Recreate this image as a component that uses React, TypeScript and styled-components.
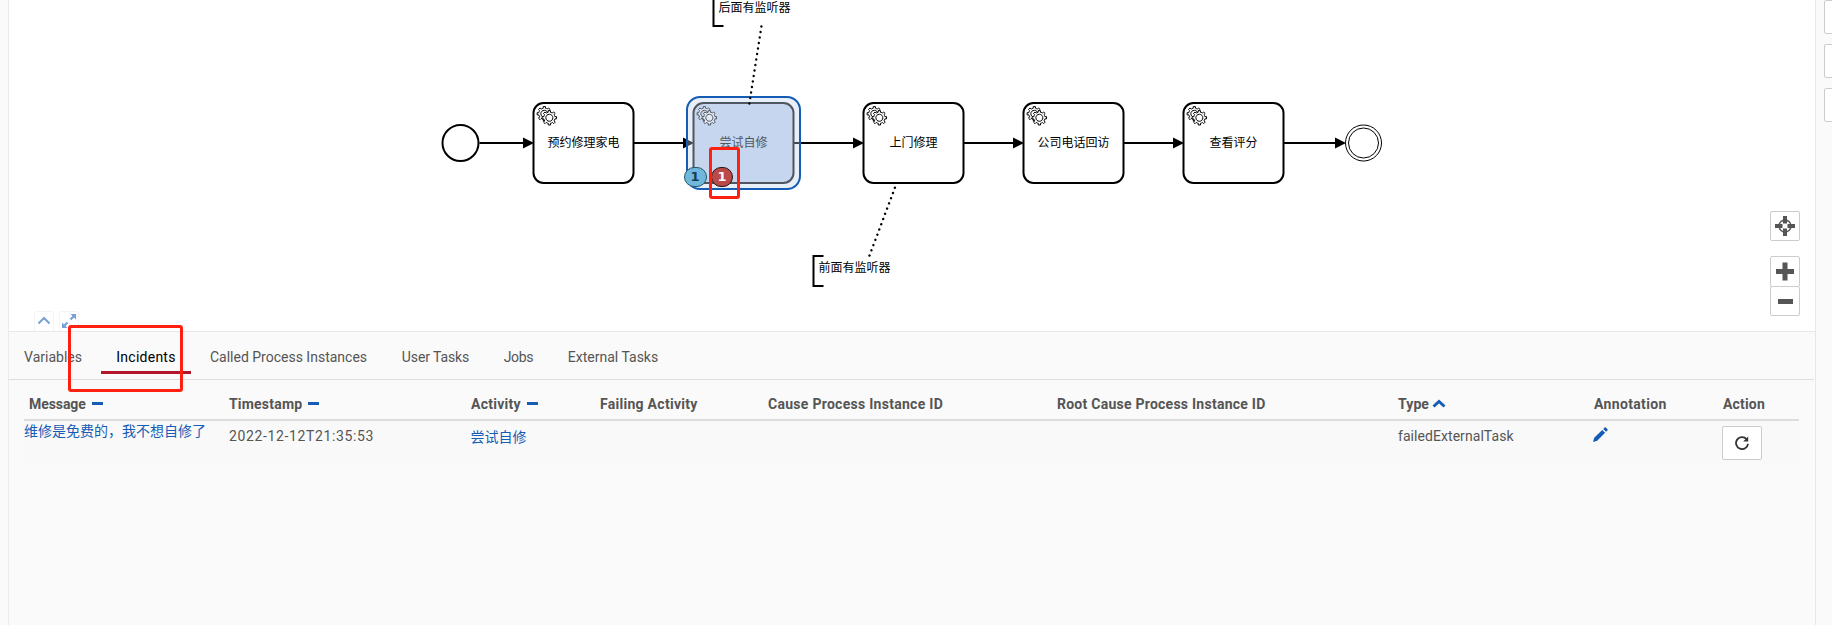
import React from 'react';
import styled, { createGlobalStyle } from 'styled-components';

const Global = createGlobalStyle`
  *, *::before, *::after { box-sizing: border-box; }
  body { margin: 0; overflow: hidden; background: #fafafa; color: #555; font: 14px/20px Roboto, "Noto Sans CJK SC", sans-serif; }
  button { margin: 0; padding: 0; font: inherit; }
`;

const Page = styled.div`
  display: grid;
  grid-template-columns: 8px 1808px 16px;
  width: 1832px;
  height: 625px;
  overflow: hidden;
`;
const Main = styled.main`
  grid-column: 2;
  display: flex;
  flex-direction: column;
  border-left: 1px solid #eaeaea;
  border-right: 1px solid #e8e8e8;
`;
const Canvas = styled.section`
  position: relative;
  height: 332px;
  flex: none;
  background: #fff;
  border-bottom: 1px solid #e8e8e8;
`;
const Diagram = styled.svg`
  display: block;
  font-family: "Noto Sans CJK SC", sans-serif;
  font-size: 12px;
`;
const Badge = styled.span<{ $tone: 'run' | 'incident'; $x: number }>`
  position: absolute;
  left: ${(p) => p.$x}px;
  top: 167px;
  width: ${(p) => (p.$tone === 'run' ? 23 : 22)}px;
  height: 20px;
  border: 1px solid ${(p) => (p.$tone === 'run' ? '#27566b' : '#2a1414')};
  border-radius: 10px;
  background: ${(p) => (p.$tone === 'run' ? '#70b8db' : '#b94a48')};
  color: ${(p) => (p.$tone === 'run' ? '#143f50' : '#fff')};
  font: 700 13px/18px "DejaVu Sans", sans-serif;
  text-align: center;
`;
const Marker = styled.div<{ $x: number; $y: number; $w: number; $h: number }>`
  position: absolute;
  z-index: 2;
  left: ${(p) => p.$x}px;
  top: ${(p) => p.$y}px;
  width: ${(p) => p.$w}px;
  height: ${(p) => p.$h}px;
  border: 3px solid #ff2012;
  border-radius: 3px;
`;
const Controls = styled.div`
  position: absolute;
  right: 15px;
  top: 211px;
  display: flex;
  flex-direction: column;
  gap: 15px;
`;
const ControlGroup = styled.div`
  display: flex;
  flex-direction: column;
`;
const Control = styled.button<{ $joined?: boolean }>`
  display: grid;
  place-items: center;
  width: 30px;
  height: ${(p) => (p.$joined ? 31 : 30)}px;
  border: 1px solid #ccc;
  border-radius: 2px;
  background: #fff;
  & + & { margin-top: -1px; }
`;
const Handles = styled.div`
  position: absolute;
  left: 25px;
  bottom: 0;
  display: flex;
  gap: 5px;
`;
const Handle = styled.span`
  display: grid;
  justify-content: center;
  padding-top: 2px;
  width: 20px;
  height: 20px;
  border: 1px solid #f4f4f4;
  border-bottom: 0;
  border-radius: 3px 3px 0 0;
`;
const Tabs = styled.nav`
  display: flex;
  height: 48px;
  flex: none;
  padding-left: 15px;
  margin-right: 1px;
  border-bottom: 1px solid #ddd;
`;
const Tab = styled.a<{ $w: number; $s?: number; $gap?: number; $active?: boolean }>`
  width: ${(p) => p.$w}px;
  height: 42px;
  padding-top: 15px;
  margin-right: ${(p) => p.$gap ?? 2}px;
  text-align: center;
  white-space: nowrap;
  letter-spacing: ${(p) => p.$s ?? 0}px;
  color: ${(p) => (p.$active ? '#000' : '#555')};
  border-bottom: ${(p) => (p.$active ? '3px solid #b5152b' : '0')};
`;
const Table = styled.div`
  margin: 10px 16px 0 15px;
`;
const Row = styled.div<{ $head?: boolean }>`
  display: grid;
  grid-template-columns: 200px 242px 129px 168px 289px 341px 196px 129px 1fr;
  height: ${(p) => (p.$head ? 31 : 44)}px;
  font-weight: ${(p) => (p.$head ? 700 : 400)};
  border-bottom: ${(p) => (p.$head ? '2px solid #ddd' : '0')};
  background: ${(p) => (p.$head ? 'transparent' : '#f9f9f9')};
`;
const Cell = styled.div<{ $s?: number; $pad?: number; $top?: number }>`
  display: flex;
  align-items: flex-start;
  padding-left: ${(p) => p.$pad ?? 5}px;
  padding-top: ${(p) => p.$top ?? 4}px;
  letter-spacing: ${(p) => p.$s ?? 0}px;
  white-space: nowrap;
`;
const Link = styled.a`
  color: #155cb5;
  font-family: "Noto Sans CJK SC", sans-serif;
  line-height: 18px;
`;
const Dash = styled.i`
  width: 11px;
  height: 3px;
  margin: 8px 0 0 6px;
  background: #155cb5;
`;
const SortUp = styled.svg`
  margin: 5px 0 0 3px;
`;
const Retry = styled.button`
  display: grid;
  place-items: center;
  width: 40px;
  height: 34px;
  border: 1px solid #ccc;
  border-radius: 2px;
  background: #fff;
`;
const Side = styled.aside`
  display: flex;
  flex-direction: column;
  gap: 10px;
  padding-left: 8px;
`;
const SideButton = styled.span`
  width: 34px;
  height: 34px;
  flex: none;
  border: 1px solid #ccc;
  border-radius: 2px;
  background: #fff;
`;

const GEAR =
  'v -1.71335 c 0.352326,-0.0705 0.703932,-0.17838 1.047628,-0.32133 0.344416,-0.14465 0.665822,-0.32133 0.966377,-0.52145 l 1.19431,1.18005 1.567487,-1.57688 -1.195028,-1.18014 c 0.403376,-0.61394 0.683079,-1.29908 0.825447,-2.01824 l 1.622133,-0.01 v -2.2196 l -1.636514,0.01 c -0.07333,-0.35153 -0.178319,-0.70024 -0.323564,-1.04372 -0.145244,-0.34406 -0.321407,-0.6644 -0.522735,-0.96217 l 1.131035,-1.13631 -1.583305,-1.56293 -1.129598,1.13589 c -0.614052,-0.40108 -1.302883,-0.68093 -2.022633,-0.82247 l 0.0093,-1.61852 h -2.241173 l 0.0042,1.63124 c -0.353763,0.0736 -0.705369,0.17977 -1.049785,0.32371 -0.344415,0.14437 -0.665102,0.32092 -0.9635006,0.52006 l -1.1698628,-1.15823 -1.5667691,1.5792 1.1684265,1.15669 c -0.4026573,0.61283 -0.68308,1.29797 -0.8247287,2.01713 l -1.6588041,0.003 v 2.22174 l 1.6724648,-0.006 c 0.073327,0.35077 0.1797598,0.70243 0.3242851,1.04472 0.1452428,0.34448 0.3214064,0.6644 0.5227339,0.96066 l -1.1993431,1.19723 1.5840256,1.56011 1.1964668,-1.19348 c 0.6140517,0.40346 1.3028827,0.68232 2.0233517,0.82331 l 7.19e-4,1.69892 h 2.226848 z m 0.221462,-3.9957 c -1.788948,0.7502 -3.8576,-0.0928 -4.6097055,-1.87438 -0.7521065,-1.78321 0.090598,-3.84627 1.8802645,-4.59604 1.78823,-0.74936 3.856881,0.0929 4.608987,1.87437 0.752106,1.78165 -0.0906,3.84612 -1.879546,4.59605 z';

const tasks = [
  { x: 533.5, label: '预约修理家电' },
  { x: 693.5, label: '尝试自修', selected: true },
  { x: 863.5, label: '上门修理' },
  { x: 1023.5, label: '公司电话回访' },
  { x: 1183.5, label: '查看评分' },
];
const flows = [
  [479.5, 533.5],
  [633.5, 693.5],
  [793.5, 863.5],
  [963.5, 1023.5],
  [1123.5, 1183.5],
  [1283.5, 1345.5],
];

function TaskNode({ x, label, selected }: { x: number; label: string; selected?: boolean }) {
  const ink = selected ? '#50565f' : '#000';
  const fill = selected ? '#c5d6ee' : '#fff';
  const gear = selected ? '#e3ebf6' : '#fff';
  return (
    <g>
      {selected && (
        <rect x={x - 6.5} y={97} width={113} height={92} rx={13} fill="#bdd1eb" fillOpacity={0.35} stroke="#155cb5" strokeWidth={2} />
      )}
      <rect x={x} y={103} width={100} height={80} rx={10} fill={fill} stroke={ink} strokeWidth={2} />
      <path d={`M ${x + 12},121 ${GEAR}`} fill={gear} stroke={ink} />
      <circle cx={x + 16.2} cy={118} r={5.4} fill={gear} />
      <path d={`M ${x + 17},125 ${GEAR}`} fill={gear} stroke={ink} />
      <text x={x + 50} y={147} textAnchor="middle" fill={ink}>{label}</text>
    </g>
  );
}

function ProcessDiagram() {
  return (
    <Diagram width="1806" height="331" viewBox="9 0 1806 331">
      {flows.map(([a, b]) => (
        <g key={a}>
          <path d={`M${a} 143H${b - 5}`} stroke="#000" strokeWidth={2} />
          <path d={`M${b - 10.5} 137.5L${b + 0.5} 143L${b - 10.5} 148.5Z`} />
        </g>
      ))}
      <circle cx={460.5} cy={143} r={18} fill="#fff" stroke="#000" strokeWidth={2} />
      <circle cx={1363.5} cy={143} r={18} fill="#fff" stroke="#000" />
      <circle cx={1363.5} cy={143} r={15} fill="#fff" stroke="#000" />
      {tasks.map((t) => <TaskNode key={t.x} {...t} />)}
      <g fill="none" stroke="#000" strokeWidth={2}>
        <path d="M723.5 -4H713.5V26H723.5" />
        <path d="M823.5 256H813.5V286H823.5" />
        <g strokeLinecap="round" strokeWidth={2.4} strokeDasharray="0.1 5.47">
          <path d="M761.4 26.4L749.3 104" />
          <path d="M869.5 255.6L896.3 184" />
        </g>
      </g>
      <text x={718.5} y={12}>后面有监听器</text>
      <text x={818.5} y={272}>前面有监听器</text>
    </Diagram>
  );
}

export default function App() {
  return (
    <Page>
      <Global />
      <Main>
        <Canvas>
          <ProcessDiagram />
          <Badge $tone="run" $x={674.5}>1</Badge>
          <Badge $tone="incident" $x={702}>1</Badge>
          <Marker $x={700} $y={147} $w={31} $h={52} />
          <Controls>
            <Control aria-label="Reset zoom">
              <svg width="20" height="20" viewBox="0 0 20 20" fill="none" stroke="#555">
                <circle cx="10" cy="10" r="6" strokeWidth="1.4" />
                <path d="M10 0v7.5M10 12.5V20M0 10h7.5M12.5 10H20" strokeWidth="4" />
              </svg>
            </Control>
            <ControlGroup>
              <Control $joined aria-label="Zoom in">
                <svg width="20" height="20" viewBox="0 0 20 20"><path d="M1 9.5h18M10 .5v18" stroke="#555" strokeWidth="5" /></svg>
              </Control>
              <Control aria-label="Zoom out">
                <svg width="20" height="20" viewBox="0 0 20 20"><path d="M3 10.5h15" stroke="#555" strokeWidth="5" /></svg>
              </Control>
            </ControlGroup>
          </Controls>
          <Handles>
            <Handle>
              <svg width="14" height="14" viewBox="0 0 14 14"><path d="M1.5 9.5L7 4L12.5 9.5" fill="none" stroke="#76a0d6" strokeWidth="2" /></svg>
            </Handle>
            <Handle>
              <svg width="16" height="16" viewBox="0 0 16 16" fill="#76a0d6" stroke="#76a0d6"><path d="M9.5 5.5L12.5 2.5M3.5 11.5L6.5 8.5" strokeWidth="2.2" /><path d="M9.5 0H15V5.5ZM1 8.5V14H6.5Z" stroke="none" /></svg>
            </Handle>
          </Handles>
          <Marker $x={59} $y={325} $w={115} $h={67} />
        </Canvas>
        <Tabs>
          <Tab $w={58} $gap={19}>Variables</Tab>
          <Tab $w={90} $s={0.25} $active>Incidents</Tab>
          <Tab $w={191}>Called Process Instances</Tab>
          <Tab $w={99} $s={-0.1}>User Tasks</Tab>
          <Tab $w={63} $s={-0.3}>Jobs</Tab>
          <Tab $w={122}>External Tasks</Tab>
        </Tabs>
        <Table>
          <Row $head>
            <Cell $s={-0.08}>Message<Dash /></Cell>
            <Cell $s={0.2}>Timestamp<Dash /></Cell>
            <Cell $s={0.25}>Activity<Dash /></Cell>
            <Cell $s={0.28}>Failing Activity</Cell>
            <Cell $s={0.28}>Cause Process Instance ID</Cell>
            <Cell $s={0.25}>Root Cause Process Instance ID</Cell>
            <Cell $s={0.1}>
              Type
              <SortUp width="14" height="10" viewBox="0 0 14 10"><path d="M1.5 7.5L7 2.5L12.5 7.5" fill="none" stroke="#155cb5" strokeWidth="3" /></SortUp>
            </Cell>
            <Cell $s={0.35}>Annotation</Cell>
            <Cell $s={0.18}>Action</Cell>
          </Row>
          <Row>
            <Cell $pad={0} $top={0}><Link>维修是免费的，我不想自修了</Link></Cell>
            <Cell $s={0.63} $top={5}>2022-12-12T21:35:53</Cell>
            <Cell $pad={4.5} $top={6}><Link>尝试自修</Link></Cell>
            <Cell />
            <Cell />
            <Cell />
            <Cell $s={0.06} $top={5}>failedExternalTask</Cell>
            <Cell $pad={4} $top={6}>
              <svg width="15" height="15" viewBox="0 0 15 15" fill="#155cb5"><path d="M0 15L1.2 10.8L9.2 2.9L12.1 5.8L4.2 13.8ZM10.2 1.9L11.6 .5Q12.2 0 12.8 .5L14.5 2.2Q15 2.8 14.5 3.4L13.1 4.8Z" /></svg>
            </Cell>
            <Cell $pad={4} $top={5}>
              <Retry aria-label="Retry">
                <svg width="14" height="14" viewBox="0 0 14 14"><path d="M11.6 3.2A6 6 0 1 0 13 7.8" fill="none" stroke="#333" strokeWidth="1.8" /><path d="M13.2 .4V5.4H8.2Z" fill="#333" /></svg>
              </Retry>
            </Cell>
          </Row>
        </Table>
      </Main>
      <Side><SideButton /><SideButton /><SideButton /></Side>
    </Page>
  );
}
